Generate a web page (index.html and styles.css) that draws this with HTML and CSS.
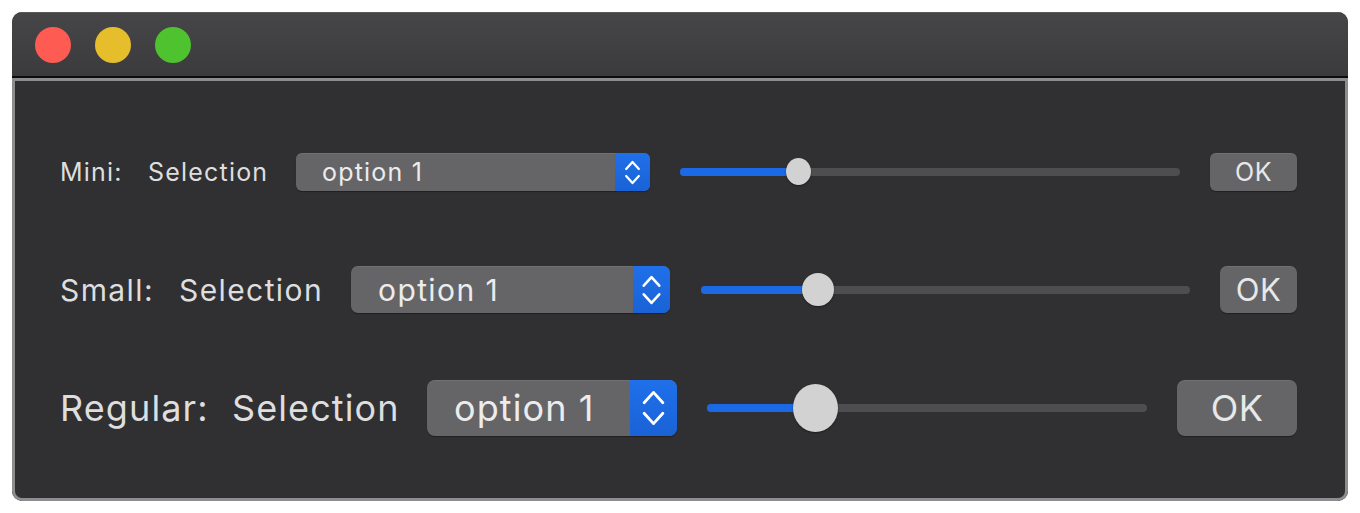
FILE: index.html
```html
<!DOCTYPE html>
<html>
<head>
<meta charset="utf-8">
<link rel="stylesheet" href="styles.css">
</head>
<body>
<div class="window">
  <div class="titlebar">
    <span class="light red"></span>
    <span class="light yellow"></span>
    <span class="light green"></span>
  </div>
  <div class="content">
    <div class="row mini">
      <span class="lbl lbl1">Mini:</span>
      <span class="lbl lbl2">Selection</span>
      <div class="popup">
        <span class="ptext">option 1</span>
        <span class="arrows"><svg viewBox="0 0 12 22"><path d="M1.5 8.5 L6 3.5 L10.5 8.5 M1.5 13.5 L6 18.5 L10.5 13.5"/></svg></span>
      </div>
      <div class="slider"><div class="track"></div><div class="fill"></div><div class="knob"></div></div>
      <button class="ok">OK</button>
    </div>
    <div class="row small">
      <span class="lbl lbl1">Small:</span>
      <span class="lbl lbl2">Selection</span>
      <div class="popup">
        <span class="ptext">option 1</span>
        <span class="arrows"><svg viewBox="0 0 12 22"><path d="M1.5 8.5 L6 3.5 L10.5 8.5 M1.5 13.5 L6 18.5 L10.5 13.5"/></svg></span>
      </div>
      <div class="slider"><div class="track"></div><div class="fill"></div><div class="knob"></div></div>
      <button class="ok">OK</button>
    </div>
    <div class="row regular">
      <span class="lbl lbl1">Regular:</span>
      <span class="lbl lbl2">Selection</span>
      <div class="popup">
        <span class="ptext">option 1</span>
        <span class="arrows"><svg viewBox="0 0 12 22"><path d="M1.5 8.5 L6 3.5 L10.5 8.5 M1.5 13.5 L6 18.5 L10.5 13.5"/></svg></span>
      </div>
      <div class="slider"><div class="track"></div><div class="fill"></div><div class="knob"></div></div>
      <button class="ok">OK</button>
    </div>
  </div>
</div>
</body>
</html>
```

FILE: styles.css
```css
html, body {
  margin: 0;
  padding: 0;
  background: #ffffff;
}
body {
  width: 1360px;
  height: 513px;
  font-family: Inter, "Noto Sans", "Liberation Sans", sans-serif;
}
.window {
  margin: 12px 0 0 12px;
  width: 1336px;
  height: 489px;
  border-radius: 10px;
  overflow: hidden;
  display: flex;
  flex-direction: column;
  background: #303032;
}
.titlebar {
  flex: none;
  height: 66px;
  box-sizing: border-box;
  background: linear-gradient(#464648, #3b3b3d);
  border-top: 1px solid #5a5a5c;
  border-bottom: 2px solid #0c0c0c;
  display: flex;
  align-items: center;
  padding-left: 23px;
  gap: 24px;
}
.light {
  width: 36px;
  height: 36px;
  border-radius: 50%;
  display: block;
}
.red { background: #fe5b53; }
.yellow { background: #e6be2c; }
.green { background: #4fc22f; }
.content {
  flex: 1;
  border: 3px solid #8d8d8f;
  border-radius: 0 0 10px 10px;
  background: #303032;
  padding: 72px 48px 0 45px;
  display: flex;
  flex-direction: column;
}
.row {
  display: flex;
  align-items: center;
  color: #dedede;
}
.lbl { flex: none; white-space: nowrap; }
.popup {
  flex: none;
  display: flex;
  align-items: stretch;
  background: #656567;
  border-radius: 7px;
  overflow: hidden;
  box-shadow: 0 1px 1px rgba(0,0,0,0.35), inset 0 1px 0 rgba(255,255,255,0.08);
  color: #ececec;
}
.ptext {
  flex: 1;
  display: flex;
  align-items: center;
  white-space: nowrap;
}
.arrows {
  flex: none;
  background: linear-gradient(#1f70ea, #1a62d6);
  display: flex;
  align-items: center;
  justify-content: center;
}
.arrows svg {
  fill: none;
  stroke: #ffffff;
  stroke-width: 1.6;
  stroke-linecap: round;
  stroke-linejoin: round;
}
.slider {
  flex: 1;
  position: relative;
  align-self: stretch;
}
.track {
  position: absolute;
  left: 0; right: 0;
  top: 50%;
  height: 8px;
  margin-top: -4px;
  border-radius: 4px;
  background: #4e4e50;
}
.fill {
  position: absolute;
  left: 0;
  top: 50%;
  height: 8px;
  margin-top: -4px;
  border-radius: 4px;
  background: #1b69e4;
}
.knob {
  position: absolute;
  top: 50%;
  border-radius: 50%;
  background: #d2d2d2;
  box-shadow: 0 1px 2px rgba(0,0,0,0.4);
}
.ok {
  flex: none;
  border: none;
  background: #656567;
  color: #e8e8e8;
  font-family: inherit;
  padding: 0;
  margin-left: 30px;
  box-shadow: 0 1px 1px rgba(0,0,0,0.35), inset 0 1px 0 rgba(255,255,255,0.08);
}

/* Mini */
.mini { height: 38px; font-size: 25px; letter-spacing: 1.2px; }
.mini .lbl1 { width: 88px; }
.mini .lbl2 { width: 148px; }
.mini .popup { width: 354px; height: 38px; border-radius: 6px; }
.mini .ptext { padding-left: 26px; }
.mini .arrows { width: 35px; }
.mini .arrows svg { width: 17px; height: 31px; }
.mini .slider { margin-left: 30px; }
.mini .fill { width: 119px; }
.mini .knob { width: 25px; height: 27px; margin-top: -14px; left: 106px; }
.mini .ok { width: 87px; height: 38px; border-radius: 6px; font-size: 25px; letter-spacing: 0.5px; }

/* Small */
.small { height: 47px; font-size: 30px; letter-spacing: 1.4px; margin-top: 75px; }
.small .lbl1 { width: 119px; }
.small .lbl2 { width: 172px; }
.small .popup { width: 319px; height: 47px; }
.small .ptext { padding-left: 27px; }
.small .arrows { width: 37px; }
.small .arrows svg { width: 21px; height: 38px; stroke-width: 1.5; }
.small .slider { margin-left: 31px; }
.small .fill { width: 117px; }
.small .knob { width: 32px; height: 33px; margin-top: -17px; left: 101px; }
.small .ok { width: 77px; height: 47px; border-radius: 7px; font-size: 31px; letter-spacing: 0.5px; }

/* Regular */
.regular { height: 56px; font-size: 36px; letter-spacing: 1.1px; margin-top: 67px; }
.regular .lbl1 { width: 172px; }
.regular .lbl2 { width: 195px; }
.regular .popup { width: 250px; height: 56px; border-radius: 8px; }
.regular .ptext { padding-left: 27px; }
.regular .arrows { width: 47px; }
.regular .arrows svg { width: 25px; height: 46px; stroke-width: 1.35; }
.regular .slider { margin-left: 30px; }
.regular .fill { width: 109px; }
.regular .knob { width: 45px; height: 48px; margin-top: -24px; left: 86px; }
.regular .ok { width: 120px; height: 56px; border-radius: 8px; font-size: 36px; letter-spacing: 0.5px; }
```
